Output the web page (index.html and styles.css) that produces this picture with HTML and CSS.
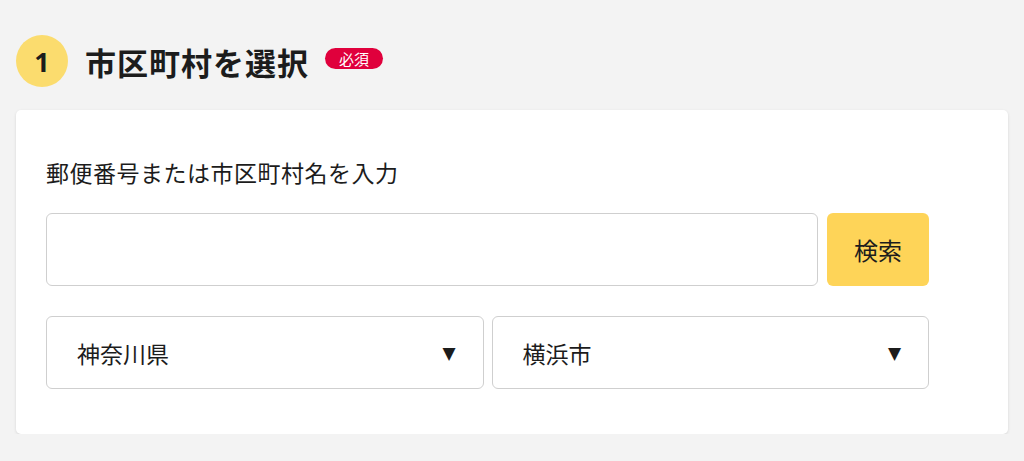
FILE: index.html
```html
<!DOCTYPE html>
<html lang="ja">
<head>
    <meta charset="UTF-8">
    <meta name="viewport" content="width=device-width, initial-scale=1.0">
    <title>市区町村を選択</title>
    <link rel="stylesheet" href="styles.css">
</head>
<body>
    <div class="step">
        <div class="step-head">
            <span class="step-num">1</span>
            <h2 class="step-title">市区町村を選択</h2>
            <span class="badge">必須</span>
        </div>
        <div class="card">
            <label class="field-label" for="zip">郵便番号または市区町村名を入力</label>
            <div class="search-row">
                <input type="text" id="zip" class="text-input">
                <button class="search-btn">検索</button>
            </div>
            <div class="select-row">
                <div class="select-box">
                    <span>神奈川県</span>
                    <span class="arrow">▼</span>
                </div>
                <div class="select-box">
                    <span>横浜市</span>
                    <span class="arrow">▼</span>
                </div>
            </div>
        </div>
    </div>
</body>
</html>
```

FILE: styles.css
```css
body {
    margin: 0;
    padding: 35px 16px 0;
    background-color: #f3f3f3;
    font-family: "Noto Sans CJK JP", "Noto Sans", sans-serif;
    color: #1c1c1c;
}
.step-head {
    display: flex;
    align-items: center;
    height: 52px;
}
.step-num {
    width: 52px;
    height: 52px;
    border-radius: 50%;
    background-color: #fbdc6e;
    display: flex;
    align-items: center;
    justify-content: center;
    font-size: 27px;
    font-weight: bold;
    font-family: "Noto Sans", sans-serif;
}
.step-title {
    margin: 0 0 0 17px;
    font-size: 31px;
    font-weight: bold;
    letter-spacing: 1px;
}
.badge {
    margin: 0 0 6px 16px;
    background-color: #e0003c;
    color: white;
    font-size: 15px;
    line-height: 21px;
    padding: 0 14px;
    border-radius: 11px;
}
.card {
    margin-top: 23px;
    width: 992px;
    box-sizing: border-box;
    background-color: white;
    border-radius: 5px;
    box-shadow: 0 1px 3px rgba(0, 0, 0, 0.12);
    padding: 46px 79px 45px 30px;
}
.field-label {
    display: block;
    font-size: 23px;
    line-height: 33px;
    letter-spacing: 0.5px;
    margin-bottom: 24px;
}
.search-row {
    display: flex;
    gap: 9px;
}
.text-input {
    flex: 1;
    height: 73px;
    box-sizing: border-box;
    border: 1px solid #cfcfcf;
    border-radius: 6px;
    margin: 0;
}
.search-btn {
    width: 102px;
    height: 73px;
    border: none;
    border-radius: 6px;
    background-color: #fed458;
    font-family: inherit;
    font-size: 24px;
    color: #1c1c1c;
}
.select-row {
    display: flex;
    gap: 8px;
    margin-top: 30px;
}
.select-box {
    flex: 1;
    height: 73px;
    box-sizing: border-box;
    border: 1px solid #cfcfcf;
    border-radius: 6px;
    display: flex;
    align-items: center;
    justify-content: space-between;
    padding: 0 27px 0 30px;
    font-size: 23px;
}
.arrow {
    font-size: 17px;
    font-family: "DejaVu Sans", sans-serif;
}
```
